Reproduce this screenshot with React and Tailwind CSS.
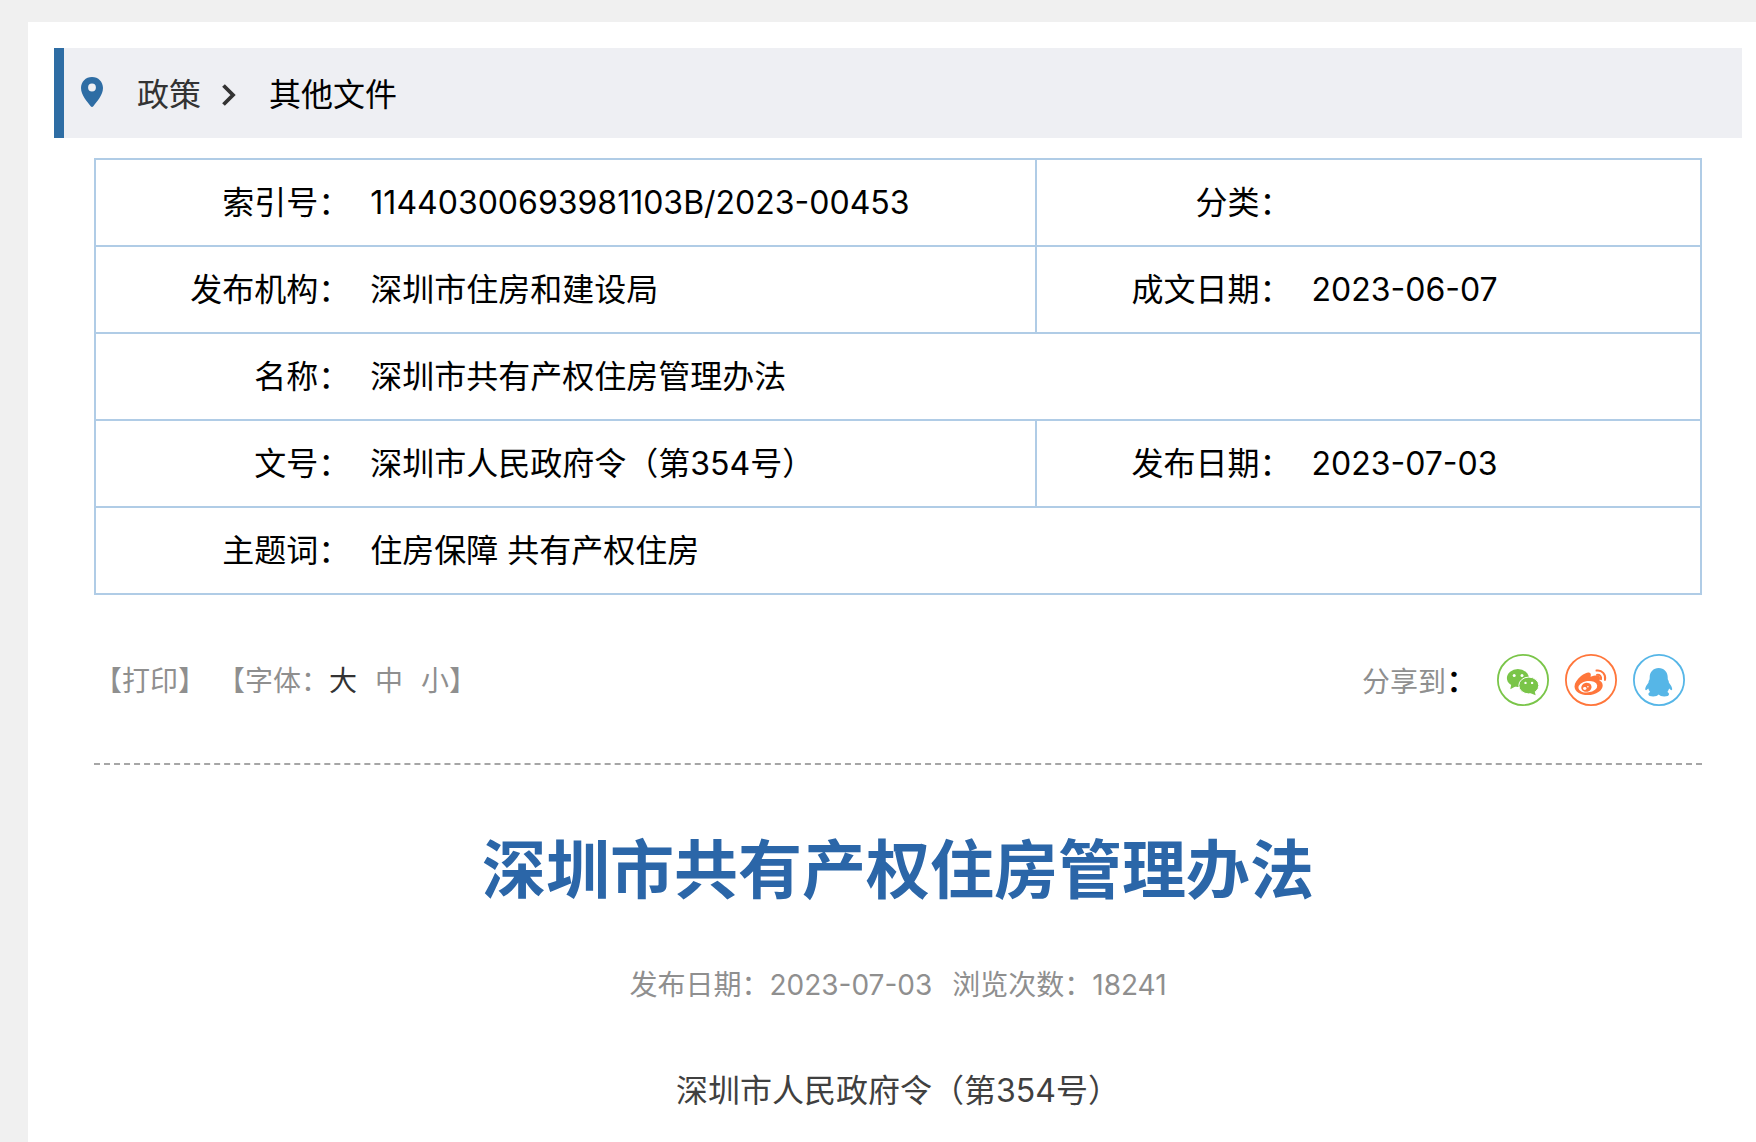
const rows = [
  [
    { label: "索引号：", value: "11440300693981103B/2023-00453" },
    { label: "分类：", value: "" },
  ],
  [
    { label: "发布机构：", value: "深圳市住房和建设局" },
    { label: "成文日期：", value: "2023-06-07" },
  ],
  [{ label: "名称：", value: "深圳市共有产权住房管理办法" }],
  [
    { label: "文号：", value: "深圳市人民政府令（第354号）" },
    { label: "发布日期：", value: "2023-07-03" },
  ],
  [{ label: "主题词：", value: "住房保障 共有产权住房" }],
];

function PinIcon() {
  return (
    <svg className="w-6 h-8" viewBox="0 0 24 32" fill="currentColor" aria-hidden="true">
      <path
        fillRule="evenodd"
        d="M12 0C5.6 0 1 4.9 1 11c0 7.300 6.400 13.700 9.700 18.200.7.900 1.900.900 2.600 0C16.600 24.700 23 18.300 23 11 23 4.900 18.400 0 12 0Zm0 6.600a3.900 3.900 0 1 1 0 7.800 3.900 3.900 0 0 1 0-7.800Z"
      />
    </svg>
  );
}

function ChevronIcon() {
  return (
    <svg className="w-4 h-6" viewBox="0 0 16 24" fill="none" stroke="currentColor" strokeWidth="3.800" aria-hidden="true">
      <path d="M2.500 2.500 12 12l-9.500 9.500" />
    </svg>
  );
}

function WechatIcon() {
  return (
    <svg className="size-[52px]" viewBox="0 0 52 52" fill="currentColor" aria-hidden="true">
      <circle cx="26" cy="26" r="25.100" fill="none" stroke="currentColor" strokeWidth="1.800" />
      <ellipse cx="20.900" cy="24" rx="11" ry="9" />
      <path d="m14.500 29-1.200 6.200 5.500-3Z" />
      <ellipse cx="31.800" cy="31.500" rx="10" ry="8.400" stroke="#fff" strokeWidth="1" />
      <path d="m33 39 5.600 2.300-1-4.500Z" />
      <g fill="#fff">
        <circle cx="17.200" cy="21.400" r="1.500" />
        <circle cx="25" cy="21.400" r="1.500" />
        <circle cx="28.500" cy="28.900" r="1.200" />
        <circle cx="35.100" cy="28.900" r="1.200" />
      </g>
    </svg>
  );
}

function WeiboIcon() {
  return (
    <svg className="size-[52px]" viewBox="0 0 52 52" fill="currentColor" aria-hidden="true">
      <circle cx="26" cy="26" r="25.100" fill="none" stroke="currentColor" strokeWidth="1.800" />
      <path d="M24.500 18.700c-1.500-.7-5 .5-8.500 3.400-3.800 3.200-6.500 7-6.500 10.400 0 5.200 6 8.600 13.200 8.600 8.700 0 15-4.800 15-9.600 0-2.700-1.600-4.100-3.200-4.700.9-2.200.7-4-.6-4.800-1.700-1-4.900-.6-8.400.8.7-2.200.4-3.500-1-4.100Z" />
      <ellipse cx="22.800" cy="32.700" rx="9.500" ry="5.700" fill="#fff" transform="rotate(-8 22.800 32.700)" />
      <ellipse cx="21.400" cy="33.300" rx="5.200" ry="4.500" transform="rotate(-15 21.400 33.300)" />
      <ellipse cx="19.800" cy="34.500" rx="1.700" ry="1.400" fill="#fff" />
      <circle cx="22.900" cy="32.700" r=".8" fill="#fff" />
      <g fill="none" stroke="currentColor" strokeWidth="2" strokeLinecap="round">
        <path d="M31.500 16.600c5.500-.9 9.600 3.900 8.500 9.300" />
        <path d="M32 20.900c2.900-.4 4.600 1.800 4 4.400" />
      </g>
    </svg>
  );
}

function QqIcon() {
  return (
    <svg className="size-[52px]" viewBox="0 0 52 52" fill="currentColor" aria-hidden="true">
      <circle cx="26" cy="26" r="25.100" fill="none" stroke="currentColor" strokeWidth="1.800" />
      <path d="M25.700 14c-5.300 0-9 4-9 9 0 1.500 0 2.500-.7 3.500-.5.700-.3 1.500-.6 2.200-1.700 2.300-3.200 4.600-3.200 6.300 0 .7.300 1.200.8 1.200.7 0 1.400-.8 2.300-1.600.3 1.300.9 2.400 1.700 3.400-1 .5-1.600 1.300-1.600 2.200 0 1.500 1.800 2.200 4.800 2.200 2.600 0 4.300-.8 5.500-2 1.200 1.200 2.900 2 5.500 2 3 0 4.800-.7 4.800-2.200 0-.9-.6-1.700-1.600-2.200.8-1 1.400-2.100 1.700-3.400.9.800 1.600 1.600 2.300 1.600.5 0 .8-.5.8-1.200 0-1.700-1.500-4-3.200-6.300-.3-.7-.1-1.500-.6-2.200-.7-1-.7-2-.7-3.500 0-5-3.700-9-9-9Z" />
    </svg>
  );
}

function Breadcrumb() {
  return (
    <nav className="flex items-center h-[90px] bg-[#eeeff3] border-l-[10px] border-[#2e6da4] pl-4 text-[32px] leading-12">
      <span className="text-[#2e6da4] mr-8"><PinIcon /></span>
      <div className="flex items-center pt-1 pl-px">
        <a href="#policy" className="text-[#333333]">政策</a>
        <span className="text-[#333333] ml-5 mr-8"><ChevronIcon /></span>
        <a href="#others">其他文件</a>
      </div>
    </nav>
  );
}

function InfoTable() {
  return (
    <table className="w-full table-fixed border-collapse border-2 border-[#b0cce6] text-[32px] leading-[45px]">
      <colgroup>
        <col className="w-[15.900%]" />
        <col />
        <col className="w-[15.900%]" />
        <col className="w-[25.500%]" />
      </colgroup>
      <tbody>
        {rows.map((cells) => (
          <tr key={cells[0].label} className="border-b-2 border-[#b0cce6]">
            {cells.map((cell, i) => [
              <th
                key={cell.label}
                scope="row"
                className={`py-5 font-normal text-right whitespace-nowrap ${i > 0 ? "border-l-2 border-[#b0cce6]" : ""}`}
              >
                {cell.label}
              </th>,
              <td key={cell.label + "v"} colSpan={cells.length === 1 ? 3 : 1} className="py-5 pl-5">
                {cell.value}
              </td>,
            ])}
          </tr>
        ))}
      </tbody>
    </table>
  );
}

function Toolbar() {
  return (
    <div className="flex items-center justify-between h-[170px] pt-[2px] border-b-2 border-dashed border-[#a6a6a6] pr-[17px] text-[28px] leading-10 text-[#8f8f8f]">
      <div className="flex items-center pt-[2px]">
        <button type="button" className="mr-[11px]">【打印】</button>
        <span>【字体：</span>
        <button type="button" className="text-[#333333] mr-[18px]">大</button>
        <button type="button" className="mr-[18px]">中</button>
        <button type="button">小</button>
        <span>】</span>
      </div>
      <div className="flex items-center gap-4">
        <span className="mr-[3px] pt-[2px]">
          分享到<span className="text-black text-[32px] font-medium">：</span>
        </span>
        <a href="#wechat" aria-label="微信" className="text-[#7ac549]"><WechatIcon /></a>
        <a href="#weibo" aria-label="微博" className="text-[#ff763b]"><WeiboIcon /></a>
        <a href="#qq" aria-label="QQ" className="text-[#56b6e7]"><QqIcon /></a>
      </div>
    </div>
  );
}

export default function App() {
  return (
    <div className="min-h-screen bg-[#f0f0f0] pt-[22px] pl-7 text-black font-[Inter,'Noto_Sans_CJK_SC',sans-serif]" lang="zh-CN">
      <div className="min-h-[calc(100vh-22px)] bg-white pt-[26px] pl-[26px] pr-[14px]">
        <Breadcrumb />
        <main className="px-10 pt-5">
          <InfoTable />
          <Toolbar />
          <article className="text-center">
            <h1 className="pt-[60px] text-[64px] leading-[90px] font-bold text-[#2b66a8]">
              深圳市共有产权住房管理办法
            </h1>
            <div className="flex justify-center gap-5 mt-[50px] text-[28px] leading-10 text-[#8f8f8f]">
              <span>发布日期：2023-07-03</span>
              <span>浏览次数：18241</span>
            </div>
            <p className="mt-[62px] text-[32px] leading-12 text-[#404040]">深圳市人民政府令（第354号）</p>
          </article>
        </main>
      </div>
    </div>
  );
}
